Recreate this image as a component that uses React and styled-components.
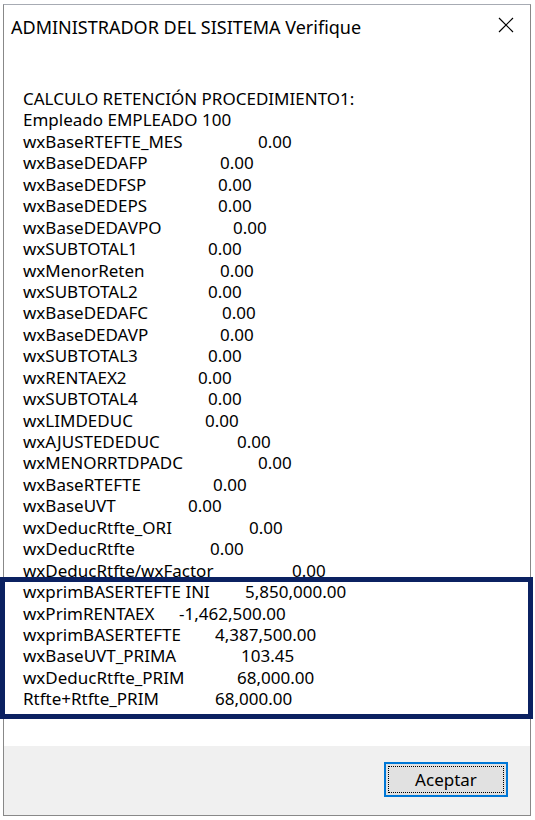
import React from "react";
import styled, { createGlobalStyle } from "styled-components";

const rows = [
  { label: "wxBaseRTEFTE_MES", value: "0.00", x: 258 },
  { label: "wxBaseDEDAFP", value: "0.00", x: 220 },
  { label: "wxBaseDEDFSP", value: "0.00", x: 218 },
  { label: "wxBaseDEDEPS", value: "0.00", x: 218 },
  { label: "wxBaseDEDAVPO", value: "0.00", x: 233 },
  { label: "wxSUBTOTAL1", value: "0.00", x: 208 },
  { label: "wxMenorReten", value: "0.00", x: 220 },
  { label: "wxSUBTOTAL2", value: "0.00", x: 208 },
  { label: "wxBaseDEDAFC", value: "0.00", x: 222 },
  { label: "wxBaseDEDAVP", value: "0.00", x: 220 },
  { label: "wxSUBTOTAL3", value: "0.00", x: 208 },
  { label: "wxRENTAEX2", value: "0.00", x: 198 },
  { label: "wxSUBTOTAL4", value: "0.00", x: 208 },
  { label: "wxLIMDEDUC", value: "0.00", x: 205 },
  { label: "wxAJUSTEDEDUC", value: "0.00", x: 237 },
  { label: "wxMENORRTDPADC", value: "0.00", x: 258 },
  { label: "wxBaseRTEFTE", value: "0.00", x: 213 },
  { label: "wxBaseUVT", value: "0.00", x: 188 },
  { label: "wxDeducRtfte_ORI", value: "0.00", x: 249 },
  { label: "wxDeducRtfte", value: "0.00", x: 210 },
  { label: "wxDeducRtfte/wxFactor", value: "0.00", x: 292 },
  { label: "wxprimBASERTEFTE INI", value: "5,850,000.00", x: 245 },
  { label: "wxPrimRENTAEX", value: "-1,462,500.00", x: 179 },
  { label: "wxprimBASERTEFTE", value: "4,387,500.00", x: 215 },
  { label: "wxBaseUVT_PRIMA", value: "103.45", x: 241 },
  { label: "wxDeducRtfte_PRIM", value: "68,000.00", x: 237 },
  { label: "Rtfte+Rtfte_PRIM", value: "68,000.00", x: 215 },
];

const TEXT_LEFT = 23;

export default function App() {
  return (
    <>
      <GlobalStyle />
      <Screen>
        <Dialog>
          <TitleBar>
            <Title>ADMINISTRADOR DEL SISITEMA Verifique</Title>
            <CloseButton aria-label="Cerrar">
              <svg width="16" height="16" viewBox="0 0 16 16">
                <path d="M1 1 L15 15 M15 1 L1 15" stroke="#000" strokeWidth="1.2" fill="none" />
              </svg>
            </CloseButton>
          </TitleBar>
          <Message>
            <Line>CALCULO RETENCIÓN PROCEDIMIENTO1:</Line>
            <Line>Empleado EMPLEADO 100</Line>
            {rows.map((r) => (
              <Line key={r.label}>
                <Label $w={r.x - TEXT_LEFT}>{r.label}</Label>
                <span>{r.value}</span>
              </Line>
            ))}
          </Message>
          <Footer>
            <OkButton>Aceptar</OkButton>
          </Footer>
        </Dialog>
        <Highlight />
      </Screen>
    </>
  );
}

const GlobalStyle = createGlobalStyle`
  body {
    margin: 0;
    background: #ffffff;
    font-family: "Noto Sans", "Open Sans", sans-serif;
    color: #000;
  }
`;

const Screen = styled.div`
  position: relative;
  width: 535px;
  height: 820px;
  padding: 4px 0 0 3px;
  box-sizing: border-box;
`;

const Dialog = styled.div`
  width: 528px;
  height: 812px;
  box-sizing: border-box;
  border: 1px solid #888888;
  border-top-color: #a7abb3;
  background: #ffffff;
  display: flex;
  flex-direction: column;
`;

const TitleBar = styled.div`
  height: 43px;
  flex-shrink: 0;
  display: flex;
  align-items: center;
  justify-content: space-between;
  padding: 0 14px 0 7px;
`;

const Title = styled.div`
  font-size: 18px;
`;

const CloseButton = styled.div`
  display: flex;
  align-items: center;
  justify-content: center;
  width: 20px;
  height: 20px;
  margin-top: -4px;
`;

const Message = styled.div`
  flex: 1;
  padding: 40px 0 0 ${TEXT_LEFT - 4}px;
  font-size: 17px;
`;

const Line = styled.div`
  display: flex;
  height: 21.45px;
  line-height: 21.45px;
  white-space: nowrap;
`;

const Label = styled.span`
  width: ${(p) => p.$w}px;
  flex-shrink: 0;
`;

const Footer = styled.div`
  height: 69px;
  flex-shrink: 0;
  background: #f0f0f0;
  display: flex;
  align-items: flex-start;
  justify-content: flex-end;
  padding: 16px 22px 0 0;
  box-sizing: border-box;
`;

const OkButton = styled.button`
  position: relative;
  width: 124px;
  height: 35px;
  border: 2px solid #0078d7;
  background: #e1e1e1;
  font-family: "Noto Sans", "Open Sans", sans-serif;
  font-size: 17px;
  color: #000;
  padding: 0;
  &::after {
    content: "";
    position: absolute;
    inset: 2px;
    border: 1px dotted #000;
  }
`;

const Highlight = styled.div`
  position: absolute;
  left: 0;
  top: 577px;
  width: 533px;
  height: 142px;
  box-sizing: border-box;
  border: 5px solid #0b2161;
  pointer-events: none;
`;
